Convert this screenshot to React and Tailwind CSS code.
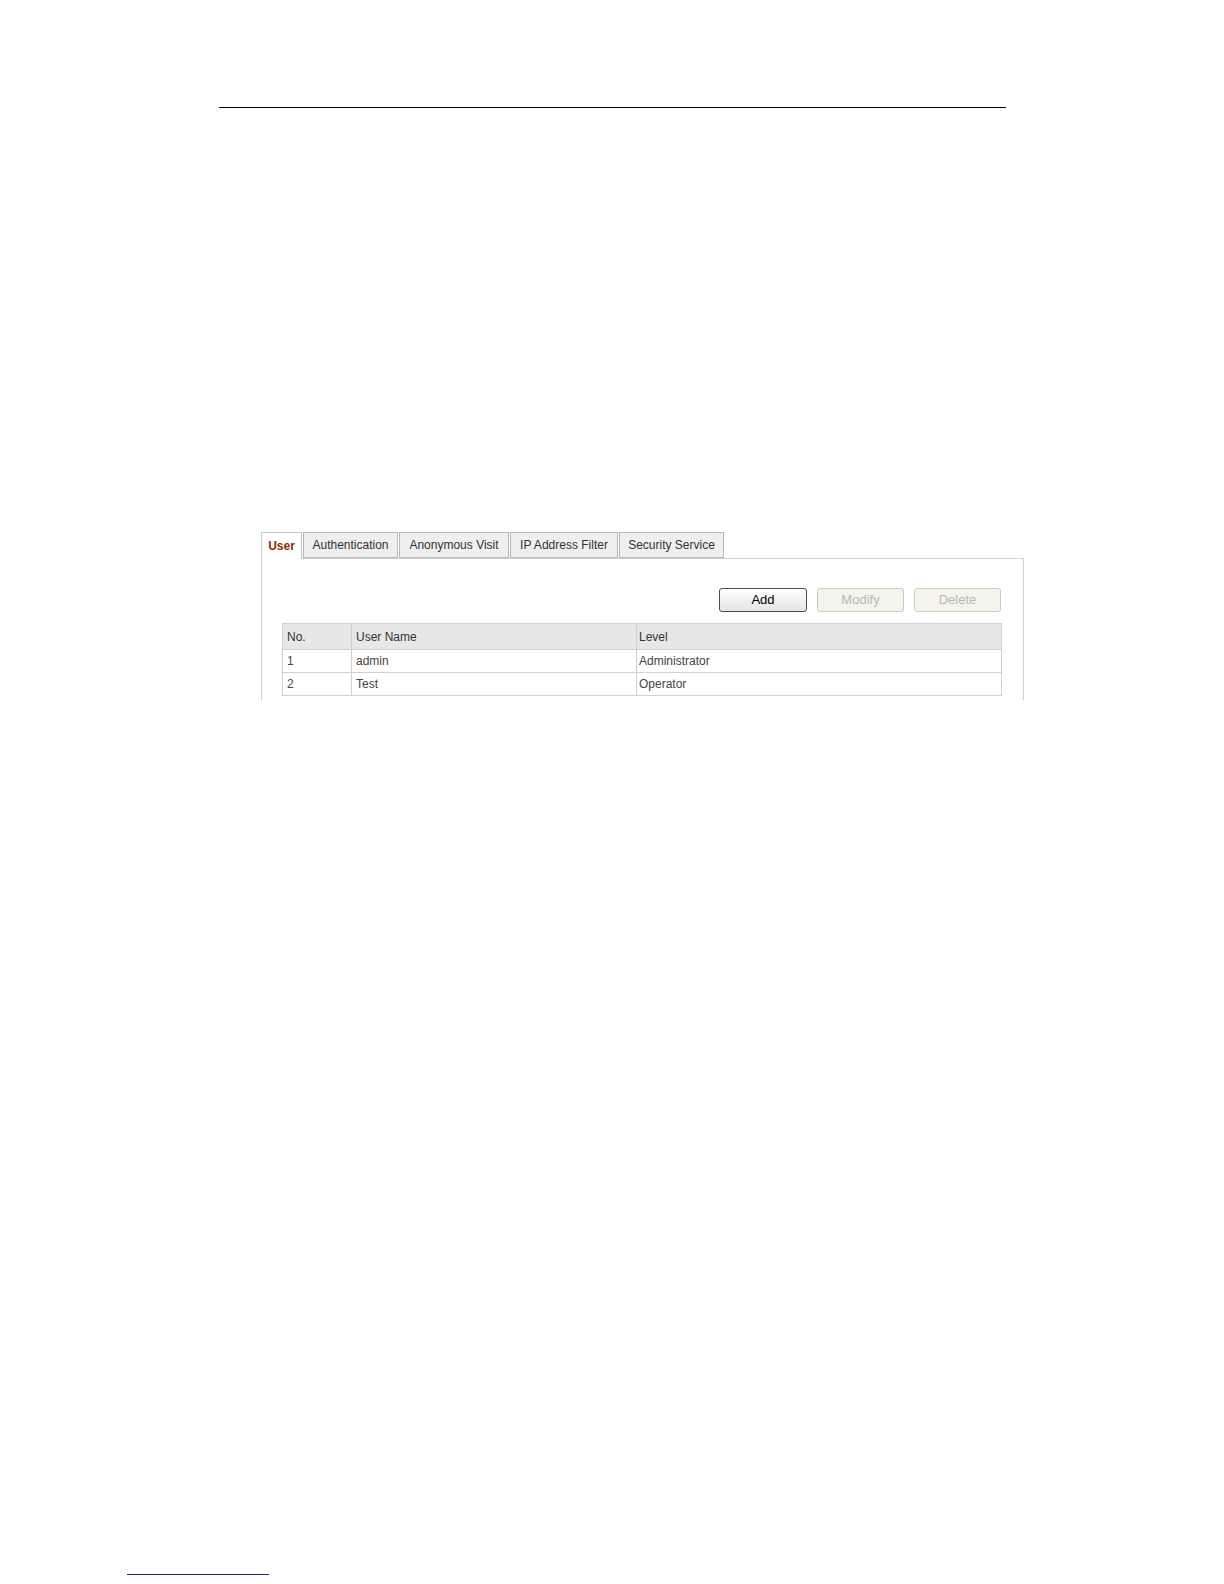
import React from 'react';

const tabs = [
  { label: 'User', width: 'w-[41px]', active: true },
  { label: 'Authentication', width: 'w-[95px]' },
  { label: 'Anonymous Visit', width: 'w-[110px]' },
  { label: 'IP Address Filter', width: 'w-[108px]' },
  { label: 'Security Service', width: 'w-[105px]' },
];

const users = [
  { no: '1', name: 'admin', level: 'Administrator' },
  { no: '2', name: 'Test', level: 'Operator' },
];

const Tab = ({ label, width, active }) => {
  if (active) {
    return (
      <div className={`${width} h-[27px] border border-b-0 border-[#c8c8c8] bg-white flex items-center justify-center text-[12px] font-bold text-[#8b2a0c] relative z-10`}>
        {label}
      </div>
    );
  }
  return (
    <div className={`${width} h-[26px] mb-px border border-[#b8b8b8] bg-[#efefef] flex items-center justify-center text-[12px] text-[#333]`}>
      {label}
    </div>
  );
};

const UserPanel = () => {
  return (
    <div className="ml-[261px] w-[763px]">
      {/* Tabs */}
      <div className="flex items-end gap-px -mb-px">
        {tabs.map((t) => (
          <Tab key={t.label} {...t} />
        ))}
      </div>

      {/* Panel */}
      <div className="h-[142px] border border-b-0 border-[#d0d0d0] pt-[29px] pl-[20px] pr-[21px]">
        <div className="flex justify-end gap-[10px] pr-[1px]">
          <button className="w-[88px] h-[24px] rounded-[3px] border border-[#3e4f5f] bg-gradient-to-b from-white to-[#e4e4e4] text-[13px] text-black">
            Add
          </button>
          <button className="w-[87px] h-[24px] rounded-[3px] border border-[#cbcbc2] bg-[#f4f4ea] text-[13px] text-[#b8b8b0]">
            Modify
          </button>
          <button className="w-[87px] h-[24px] rounded-[3px] border border-[#cbcbc2] bg-[#f4f4ea] text-[13px] text-[#b8b8b0]">
            Delete
          </button>
        </div>

        <table className="mt-[11px] w-[720px] border-collapse text-[12px] text-[#333] table-fixed">
          <thead>
            <tr className="h-[26px] bg-[#e7e7e7]">
              <th className="w-[69px] border border-[#d0d0d0] pl-[4px] text-left font-normal">No.</th>
              <th className="w-[285px] border border-[#d0d0d0] pl-[4px] text-left font-normal">User Name</th>
              <th className="border border-[#d0d0d0] pl-[2px] text-left font-normal">Level</th>
            </tr>
          </thead>
          <tbody>
            {users.map((u) => (
              <tr key={u.no} className="h-[23px] bg-white">
                <td className="border border-[#d0d0d0] pl-[4px] text-[#444]">{u.no}</td>
                <td className="border border-[#d0d0d0] pl-[4px] text-[#444]">{u.name}</td>
                <td className="border border-[#d0d0d0] pl-[2px] text-[#444]">{u.level}</td>
              </tr>
            ))}
          </tbody>
        </table>
      </div>
    </div>
  );
};

export default function App() {
  return (
    <div className="w-[1224px] h-[1584px] bg-white relative font-['Liberation_Sans',Arial,sans-serif]">
      {/* header rule */}
      <div className="pt-[107px]">
        <div className="ml-[219px] w-[787px] h-px bg-black"></div>
      </div>

      <div className="h-[424px]"></div>

      <UserPanel />

      {/* footer link underline */}
      <div className="mt-[874px] ml-[127px] w-[142px] h-px bg-[#1c1c8e]"></div>
    </div>
  );
}
